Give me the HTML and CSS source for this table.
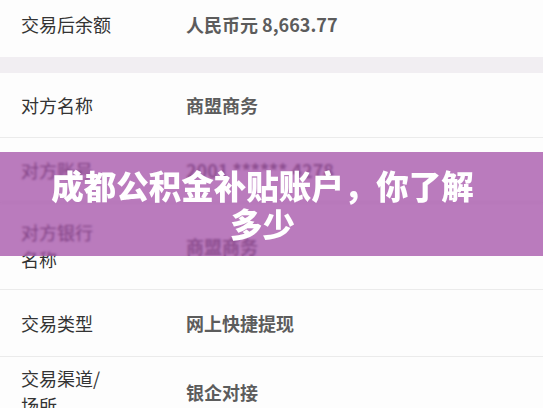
FILE: index.html
```html
<!DOCTYPE html>
<html lang="zh-CN">
<head>
<meta charset="utf-8">
<title>成都公积金补贴账户</title>
<link rel="stylesheet" href="styles.css">
</head>
<body>
<div class="page">
  <div class="row row-first">
    <div class="label">交易后余额</div>
    <div class="value">人民币元 8,663.77</div>
  </div>
  <div class="gap"></div>
  <div class="row">
    <div class="label">对方名称</div>
    <div class="value">商盟商务</div>
  </div>
  <div class="row">
    <div class="label">对方账号</div>
    <div class="value">2001 ****** 4278</div>
  </div>
  <div class="row row-double">
    <div class="label">对方银行<br>名称</div>
    <div class="value">商盟商务</div>
  </div>
  <div class="row row-tall">
    <div class="label">交易类型</div>
    <div class="value">网上快捷提现</div>
  </div>
  <div class="row row-last">
    <div class="label">交易渠道/<br>场所</div>
    <div class="value">银企对接</div>
  </div>

  <div class="banner">
    <h1 class="banner-title">成都公积金补贴账户，你了解多少</h1>
  </div>
</div>
</body>
</html>
```

FILE: styles.css
```css
html, body {
  margin: 0;
  padding: 0;
  background: #fdfdfd;
}

.page {
  position: relative;
  width: 543px;
  height: 408px;
  overflow: hidden;
  font-family: "Noto Sans CJK SC", "Noto Sans", sans-serif;
}

.row {
  display: flex;
  align-items: center;
  padding: 20px 0 20px 21px;
  border-bottom: 1px solid #ebebeb;
  background: #fdfdfd;
}

.row-first {
  padding-top: 12px;
  padding-bottom: 21px;
  border-bottom: none;
}

.row-double {
  padding-top: 16px;
  padding-bottom: 16px;
}

.row-tall {
  padding-top: 21px;
  padding-bottom: 21px;
}

.row-last {
  padding-top: 8px;
  border-bottom: none;
}

.gap {
  height: 16px;
  background: #f1eef2;
}

.label {
  width: 165px;
  flex: none;
  font-size: 18px;
  line-height: 24px;
  color: #333333;
}

.row-double .label,
.row-last .label {
  line-height: 27px;
}

.value {
  font-size: 18px;
  line-height: 24px;
  font-weight: 700;
  color: #5c5c5c;
}

.banner {
  position: absolute;
  left: 0;
  right: 0;
  top: 152px;
  height: 104px;
  display: flex;
  align-items: center;
  justify-content: center;
  background: rgba(160, 72, 164, 0.72);
  backdrop-filter: blur(1px);
  padding: 0 58px 0 40px;
  box-sizing: border-box;
}

.banner-title {
  margin: 0;
  font-size: 32.5px;
  line-height: 38px;
  font-weight: 900;
  color: #ffffff;
  text-align: center;
}
```
